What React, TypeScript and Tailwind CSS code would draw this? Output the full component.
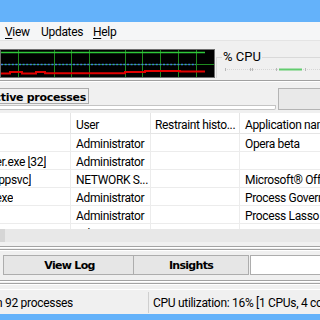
import React from "react";

const rows = [
  { p: "", pEnd: 0, u: "Administrator", a: "Opera beta" },
  { p: "opera_autoupdater.exe [32]", pEnd: 46, u: "Administrator", a: "" },
  { p: "svchost.exe [appsvc]", pEnd: 31, u: "NETWORK S...", a: "Microsoft® Office" },
  { p: "ProcessGovernor.exe", pEnd: 13, u: "Administrator", a: "Process Governor" },
  { p: "", pEnd: 0, u: "Administrator", a: "Process Lasso utility" },
  { p: "", pEnd: 0, u: "Administrator", a: "Process Lasso" },
];

function Graph() {
  const vx = [18, 54, 71, 89, 125, 142, 160, 178, 196];
  return (
    <svg width="215" height="29" viewBox="0 0 215 29" className="block shrink-0">
      <rect x="0" y="0" width="215" height="29" fill="#000" />
      <rect x="0.5" y="0.5" width="214" height="28" fill="none" stroke="#6e6e6e" />
      {vx.map((x) => (
        <line key={x} x1={x + 0.5} y1="1" x2={x + 0.5} y2="28" stroke="#1f8a1f" strokeWidth="1" />
      ))}
      <line x1="1" y1="15.5" x2="214" y2="15.5" stroke="#1f8a1f" strokeWidth="1" />
      <line x1="1" y1="3.5" x2="205" y2="3.5" stroke="#2fc83a" strokeWidth="1.5" />
      <line x1="1" y1="15.5" x2="196" y2="15.5" stroke="#3f7fe0" strokeWidth="1.5" strokeDasharray="2 1.6" />
      <path
        d="M1 24.5 H10 V23 H22 V24.5 H36 V23 H45 V24.2 H125 V23 H145 V22 H180 V22.6 H205"
        fill="none"
        stroke="#e10000"
        strokeWidth="2"
      />
    </svg>
  );
}

function Trackbar() {
  return (
    <svg width="103" height="4" viewBox="0 0 103 4" className="block">
      <line x1="8" y1="1.5" x2="103" y2="1.5" stroke="#d6d6d6" strokeWidth="1" strokeDasharray="1 1" />
      {[8, 33, 35, 59, 88].map((x) => (
        <rect key={x} x={x} y="0" width="1" height="3" fill="#b8b8b8" />
      ))}
      <rect x="62" y="0.5" width="23" height="2" fill="#62cc6f" />
    </svg>
  );
}

export default function App() {
  return (
    <div className="w-[320px] h-[320px] overflow-hidden bg-[#f0f0f0] flex flex-col font-['Roboto',sans-serif] text-black">
      {/* title bar */}
      <div className="h-[22px] shrink-0 bg-[#64b2fa]" />
      {/* menu */}
      <div className="h-[18px] shrink-0 bg-[#f5f6f7] flex items-center pl-[5px] pt-[2px] text-[12px] tracking-[-0.3px] leading-none">
        <span className="w-[36px]">
          <span className="underline underline-offset-2">V</span>iew
        </span>
        <span className="w-[52px]">Updates</span>
        <span>
          <span className="underline underline-offset-2">H</span>elp
        </span>
      </div>
      <div className="h-[9px] shrink-0 border-t border-[#e4e4e4]" />
      {/* graph row */}
      <div className="h-[29px] shrink-0 flex">
        <Graph />
        <div className="flex-1 pl-[1px]">
          <div className="relative mt-[8px] h-[21px] border-l border-t border-[#d9d9d9]">
            <span className="absolute -top-[9px] left-[5px] bg-[#f0f0f0] px-[1px] text-[13px] leading-[16px]">% CPU</span>
            <div className="pt-[10px]">
              <Trackbar />
            </div>
          </div>
        </div>
      </div>
      <div className="h-[2px] shrink-0" />
      <div className="h-[1px] shrink-0 bg-[#a0a0a0]" />
      <div className="h-[1px] shrink-0 bg-white" />
      {/* tab row */}
      <div className="h-[31px] shrink-0 flex">
        <div className="w-[276px] flex flex-col">
          <div className="h-[6px]" />
          <div className="h-[16px] w-[89px] border border-l-0 border-[#acacac] bg-[#f0f0f0] flex items-center">
            <div className="w-[86px] flex justify-end overflow-hidden whitespace-nowrap font-['DejaVu_Sans',sans-serif] font-bold text-[11px] tracking-[-0.3px] leading-none pt-[2px]">
              <span>Active processes</span>
            </div>
          </div>
          <div className="h-[1px]" />
          <div className="h-[5px] bg-white border-t border-r border-b border-[#c4c4c4] rounded-br-[2px]" />
        </div>
        <div className="w-[2px]" />
        <div className="flex-1 flex flex-col">
          <div className="h-[6px]" />
          <div className="h-[22px] border border-r-0 border-[#b4b4b4] bg-[#e9e9e9]" />
        </div>
      </div>
      {/* header */}
      <div className="h-[21px] shrink-0 bg-white border-b border-[#e5e5e5] flex text-[12px] tracking-[-0.35px] leading-none whitespace-nowrap">
        <div className="w-[71px] border-r border-[#e5e5e5]" />
        <div className="w-[80px] border-r border-[#e5e5e5] pl-[5px] flex items-center pt-[3px]">User</div>
        <div className="w-[89px] border-r border-[#e5e5e5] pl-[4px] flex items-center pt-[3px] overflow-hidden">Restraint histo...</div>
        <div className="flex-1 pl-[5px] flex items-center pt-[3px] overflow-hidden">Application name</div>
      </div>
      {/* rows */}
      <div className="h-[95px] shrink-0 bg-white overflow-hidden text-[12px] tracking-[-0.35px] leading-none whitespace-nowrap">
        {rows.map((r, i) => (
          <div key={i} className="h-[18px] flex border-b border-[#ececec]">
            <div className="w-[71px] border-r border-[#ececec] flex items-center pt-[2px]">
              {r.p && (
                <div className="flex justify-end overflow-hidden" style={{ width: r.pEnd }}>
                  <span>{r.p}</span>
                </div>
              )}
            </div>
            <div className="w-[80px] border-r border-[#ececec] pl-[5px] flex items-center pt-[2px]">{r.u}</div>
            <div className="w-[89px] border-r border-[#ececec]" />
            <div className="flex-1 pl-[5px] flex items-center pt-[2px] overflow-hidden">{r.a}</div>
          </div>
        ))}
      </div>
      {/* horizontal scrollbar */}
      <div className="h-[13px] shrink-0 bg-[#e8e8e8] flex">
        <div className="w-[5px] bg-[#d6d6d6]" />
      </div>
      {/* splitter */}
      <div className="h-[4px] shrink-0" />
      <div className="h-[1px] shrink-0 bg-[#a3a3a3]" />
      <div className="h-[1px] shrink-0 bg-white" />
      <div className="h-[1px] shrink-0" />
      <div className="h-[1px] shrink-0 bg-[#a3a3a3]" />
      <div className="h-[1px] shrink-0 bg-white" />
      <div className="h-[4px] shrink-0" />
      {/* buttons */}
      <div className="h-[20px] shrink-0 flex pl-[3px] font-['DejaVu_Sans',sans-serif] font-bold text-[11px] tracking-[-0.7px] leading-none">
        <div className="w-[131px] border border-[#adadad] bg-[#e6e6e6] flex items-center justify-center pl-[2px]">View Log</div>
        <div className="w-[115px] border border-l-0 border-[#adadad] bg-[#e6e6e6] flex items-center justify-center">Insights</div>
        <div className="flex-1 ml-[1px] border border-r-0 border-[#adadad] bg-white" />
      </div>
      {/* splitter 2 */}
      <div className="h-[5px] shrink-0" />
      <div className="h-[1px] shrink-0 bg-[#a3a3a3]" />
      <div className="h-[1px] shrink-0 bg-white" />
      <div className="h-[1px] shrink-0" />
      <div className="h-[1px] shrink-0 bg-[#a3a3a3]" />
      <div className="h-[1px] shrink-0 bg-white" />
      <div className="h-[4px] shrink-0" />
      <div className="h-[1px] shrink-0 bg-white" />
      {/* status bar */}
      <div className="h-[24px] shrink-0 flex text-[12px] tracking-[-0.3px] leading-none whitespace-nowrap">
        <div className="w-[149px] border-r border-[#cfcfcf] mt-[3px] flex items-center -translate-y-[1px]">
          <div className="w-[73px] flex justify-end overflow-hidden">
            <span>1021 threads in 92 processes</span>
          </div>
        </div>
        <div className="flex-1 pl-[4px] flex items-center overflow-hidden pt-[2px]">
          CPU utilization: 16% [1 CPUs, 4 cores]
        </div>
      </div>
      {/* bottom frame */}
      <div className="flex-1 bg-[#64b2fa]" />
    </div>
  );
}
